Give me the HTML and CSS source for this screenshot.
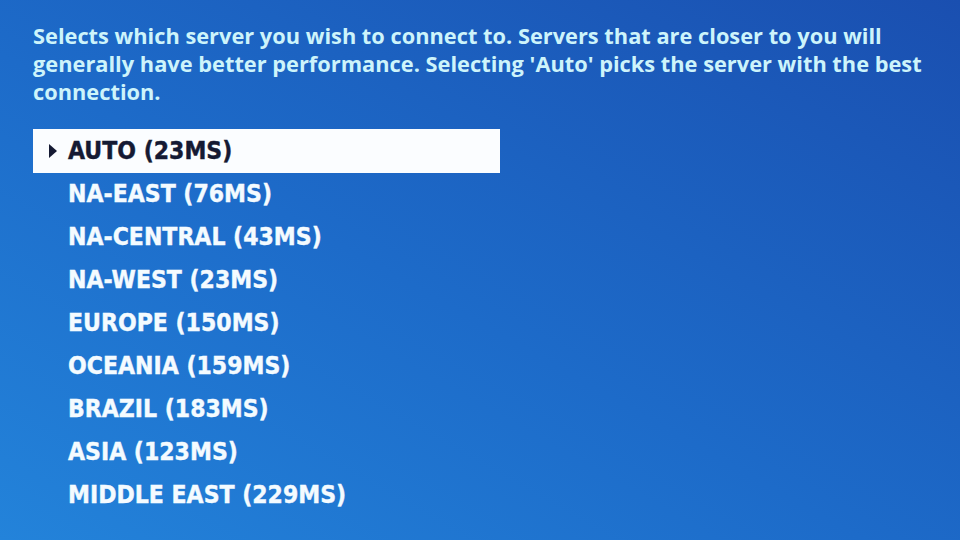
FILE: index.html
```html
<!DOCTYPE html>
<html lang="en">
<head>
    <meta charset="UTF-8">
    <title>Region</title>
    <link rel="stylesheet" href="styles.css">
</head>
<body>
    <div id="panel">
        <p class="desc">Selects which server you wish to connect to. Servers that are closer to you will generally have better performance. Selecting 'Auto' picks the server with the best connection.</p>
        <ul id="regions">
            <li class="selected">AUTO (23MS)</li>
            <li>NA-EAST (76MS)</li>
            <li>NA-CENTRAL (43MS)</li>
            <li>NA-WEST (23MS)</li>
            <li>EUROPE (150MS)</li>
            <li>OCEANIA (159MS)</li>
            <li>BRAZIL (183MS)</li>
            <li>ASIA (123MS)</li>
            <li>MIDDLE EAST (229MS)</li>
        </ul>
    </div>
</body>
</html>
```

FILE: styles.css
```css
*{
    margin: 0;
    padding: 0;
}
ul{
    list-style: none;
}
html, body{
    height: 100%;
}
body{
    background: linear-gradient(to top right, #2383da 0%, #1d6bc9 45%, #1a4fb0 100%);
    overflow: hidden;
}
#panel{
    padding: 22px 0 0 33px;
}
.desc{
    width: 900px;
    font-family: "Open Sans", Lato, sans-serif;
    font-weight: 700;
    font-size: 21.8px;
    line-height: 28px;
    color: #cdf4fb;
}
#regions{
    margin-top: 23px;
    width: 467px;
}
#regions li{
    height: 43px;
    line-height: 43px;
    padding-left: 35px;
    position: relative;
    font-family: "DejaVu Sans Condensed", "DejaVu Sans", sans-serif;
    font-weight: 700;
    font-size: 24.5px;
    color: #f4fbff;
    -webkit-text-stroke: 0.4px currentColor;
}
#regions .selected{
    height: 44px;
    margin-bottom: -1px;
    background: #fbfdff;
    color: #151a33;
}
#regions .selected::before{
    content: "";
    position: absolute;
    left: 16px;
    top: 15px;
    border-left: 8px solid #151a33;
    border-top: 7px solid transparent;
    border-bottom: 7px solid transparent;
}
```
